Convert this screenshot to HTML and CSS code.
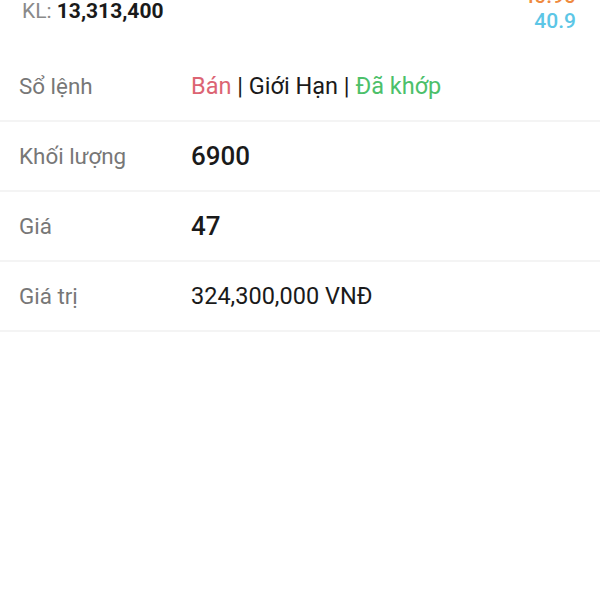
FILE: index.html
```html
<!DOCTYPE html>
<html lang="vi">
<head>
<meta charset="utf-8">
<link rel="stylesheet" href="styles.css">
</head>
<body>
<div class="page">
  <div class="head">
    <div class="kl"><span class="kl-label">KL:</span> <span class="kl-value">13,313,400</span></div>
    <div class="prices">
      <div class="p-high">40.90</div>
      <div class="p-low">40.9</div>
    </div>
  </div>
  <div class="rows">
    <div class="row">
      <div class="label">Sổ lệnh</div>
      <div class="value"><span class="sell">Bán</span> | Giới Hạn | <span class="done">Đã khớp</span></div>
    </div>
    <div class="row">
      <div class="label">Khối lượng</div>
      <div class="value bold">6900</div>
    </div>
    <div class="row">
      <div class="label">Giá</div>
      <div class="value bold">47</div>
    </div>
    <div class="row">
      <div class="label">Giá trị</div>
      <div class="value">324,300,000 VNĐ</div>
    </div>
  </div>
</div>
</body>
</html>
```

FILE: styles.css
```css
html, body {
  margin: 0;
  padding: 0;
  background: #ffffff;
}
body {
  font-family: Roboto, "Noto Sans", "Liberation Sans", sans-serif;
  color: #1a1a1a;
}
.page {
  width: 600px;
}
.head {
  display: flex;
  justify-content: space-between;
  align-items: flex-start;
  height: 52px;
  padding: 0 24px 0 22px;
}
.kl {
  font-size: 21px;
  line-height: 22px;
}
.kl-label {
  color: #8a8a8a;
}
.kl-value {
  font-weight: 700;
  color: #1a1a1a;
}
.prices {
  display: flex;
  flex-direction: column;
  align-items: flex-end;
  margin-top: -16px;
  font-size: 21px;
  font-weight: 500;
  line-height: 25px;
}
.p-high {
  color: #ef8a3e;
}
.p-low {
  color: #5cc6e6;
}
.rows {
  display: flex;
  flex-direction: column;
}
.row {
  display: flex;
  align-items: center;
  height: 70px;
  border-bottom: 2px solid #f4f4f4;
  box-sizing: border-box;
  padding-left: 19px;
}
.label {
  width: 172px;
  font-size: 22.4px;
  color: #777777;
}
.value {
  font-size: 23.5px;
  color: #1a1a1a;
}
.value.bold {
  font-weight: 500;
  font-size: 26px;
}
.sell {
  color: #dc6473;
}
.done {
  color: #4cc06a;
}
```
